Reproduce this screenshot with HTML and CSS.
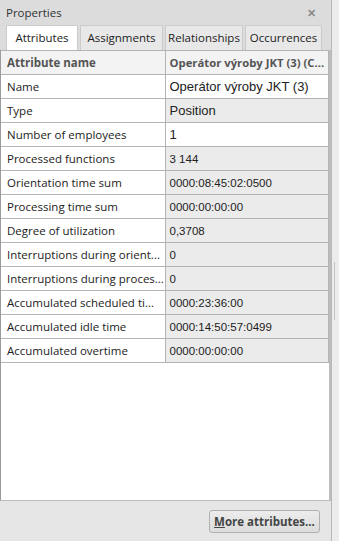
FILE: index.html
```html
<!DOCTYPE html>
<html lang="en">
  <head>
    <meta charset="UTF-8" />
    <meta name="viewport" content="width=device-width, initial-scale=1.0" />
    <title>Properties</title>
    <link rel="stylesheet" href="styles.css">
  </head>
  <body>
    <div class="window">
      <div class="panel">
        <div class="title-bar">
          <span class="title">Properties</span>
          <span class="close">&#x2715;</span>
        </div>
        <div class="tabs">
          <div class="tab active">Attributes</div>
          <div class="tab tab-assign">Assignments</div>
          <div class="tab tab-rel">Relationships</div>
          <div class="tab tab-occ">Occurrences</div>
        </div>
        <div class="grid-area">
          <table class="attr-table">
            <tr class="head">
              <td class="label">Attribute name</td>
              <td class="value">Operátor výroby JKT (3) (C...</td>
            </tr>
            <tr>
              <td class="label">Name</td>
              <td class="value editable big">Operátor výroby JKT (3)</td>
            </tr>
            <tr>
              <td class="label">Type</td>
              <td class="value big">Position</td>
            </tr>
            <tr>
              <td class="label">Number of employees</td>
              <td class="value editable big">1</td>
            </tr>
            <tr>
              <td class="label">Processed functions</td>
              <td class="value">3 144</td>
            </tr>
            <tr>
              <td class="label">Orientation time sum</td>
              <td class="value">0000:08:45:02:0500</td>
            </tr>
            <tr>
              <td class="label">Processing time sum</td>
              <td class="value">0000:00:00:00</td>
            </tr>
            <tr>
              <td class="label">Degree of utilization</td>
              <td class="value">0,3708</td>
            </tr>
            <tr>
              <td class="label">Interruptions during orient...</td>
              <td class="value">0</td>
            </tr>
            <tr>
              <td class="label">Interruptions during proces...</td>
              <td class="value">0</td>
            </tr>
            <tr>
              <td class="label">Accumulated scheduled ti...</td>
              <td class="value">0000:23:36:00</td>
            </tr>
            <tr>
              <td class="label">Accumulated idle time</td>
              <td class="value">0000:14:50:57:0499</td>
            </tr>
            <tr>
              <td class="label">Accumulated overtime</td>
              <td class="value">0000:00:00:00</td>
            </tr>
          </table>
        </div>
        <div class="footer">
          <button class="more-btn"><u>M</u>ore attributes...</button>
        </div>
      </div>
      <div class="side-strip">
        <div class="thumb"></div>
      </div>
    </div>
  </body>
</html>
```

FILE: styles.css
```css
* {
  box-sizing: border-box;
  margin: 0;
  padding: 0;
}

body {
  font-family: "Open Sans", "Noto Sans", sans-serif;
  background-color: #e6e6e6;
  width: 339px;
  height: 541px;
  overflow: hidden;
}

.window {
  display: flex;
  height: 541px;
}

.panel {
  width: 331px;
  display: flex;
  flex-direction: column;
  background-color: #dcdcdc;
}

.title-bar {
  height: 25px;
  display: flex;
  align-items: center;
  justify-content: space-between;
  padding: 0 15px 0 6px;
  font-size: 11.5px;
  color: #333;
}

.close {
  font-size: 11px;
  font-weight: bold;
  color: #8a8a8a;
}

.tabs {
  display: flex;
  height: 25px;
  padding-left: 6px;
  gap: 2px;
}

.tab {
  padding-top: 4px;
  text-align: center;
  font-size: 11.5px;
  color: #222;
  background-color: #e8e8e8;
  border: 1px solid #cbcbcb;
  border-bottom: none;
}

.tab.active {
  width: 72px;
  background-color: #ffffff;
}

.tab-assign {
  width: 83px;
}

.tab-rel {
  width: 78px;
}

.tab-occ {
  width: 77px;
}

.grid-area {
  flex: 1;
  background-color: #ffffff;
  border-left: 1px solid #9c9c9c;
  border-right: 2px solid #bdbdbd;
  border-bottom: 1px solid #bdbdbd;
}

.attr-table {
  width: 100%;
  border-collapse: collapse;
  table-layout: fixed;
}

.attr-table td {
  height: 24px;
  border: 1px solid #b4b4b4;
  border-left: none;
  padding: 0 6px;
  white-space: nowrap;
  overflow: hidden;
  font-size: 11.5px;
}

.label {
  width: 164px;
  color: #222;
  background-color: #ffffff;
}

.value {
  font-family: "Liberation Sans", Arial, sans-serif;
  font-size: 12px;
  color: #222;
  background-color: #ebebeb;
  padding-left: 4px !important;
}

.attr-table .value.big {
  font-size: 13px;
}

.value.editable {
  background-color: #ffffff;
}

.head td {
  font-weight: bold;
  color: #555;
  background-color: #f3f3f3;
}

.attr-table .head .value {
  font-family: "Open Sans", "Noto Sans", sans-serif;
  font-size: 11.3px;
}

.footer {
  height: 40px;
  display: flex;
  justify-content: flex-end;
  align-items: center;
  padding-right: 11px;
  background-color: #e6e6e6;
}

.more-btn {
  width: 111px;
  height: 23px;
  font-family: "Open Sans", "Noto Sans", sans-serif;
  font-size: 11.5px;
  font-weight: bold;
  color: #444;
  background: linear-gradient(#ececec, #dcdcdc);
  border: 1px solid #b0b0b0;
  border-radius: 3px;
}

.side-strip {
  flex: 1;
  background-color: #ececec;
  border-left: 1px solid #b8b8b8;
  position: relative;
}

.thumb {
  position: absolute;
  left: 2px;
  top: 262px;
  width: 1px;
  height: 58px;
  background-color: #c4c4c4;
}
```
